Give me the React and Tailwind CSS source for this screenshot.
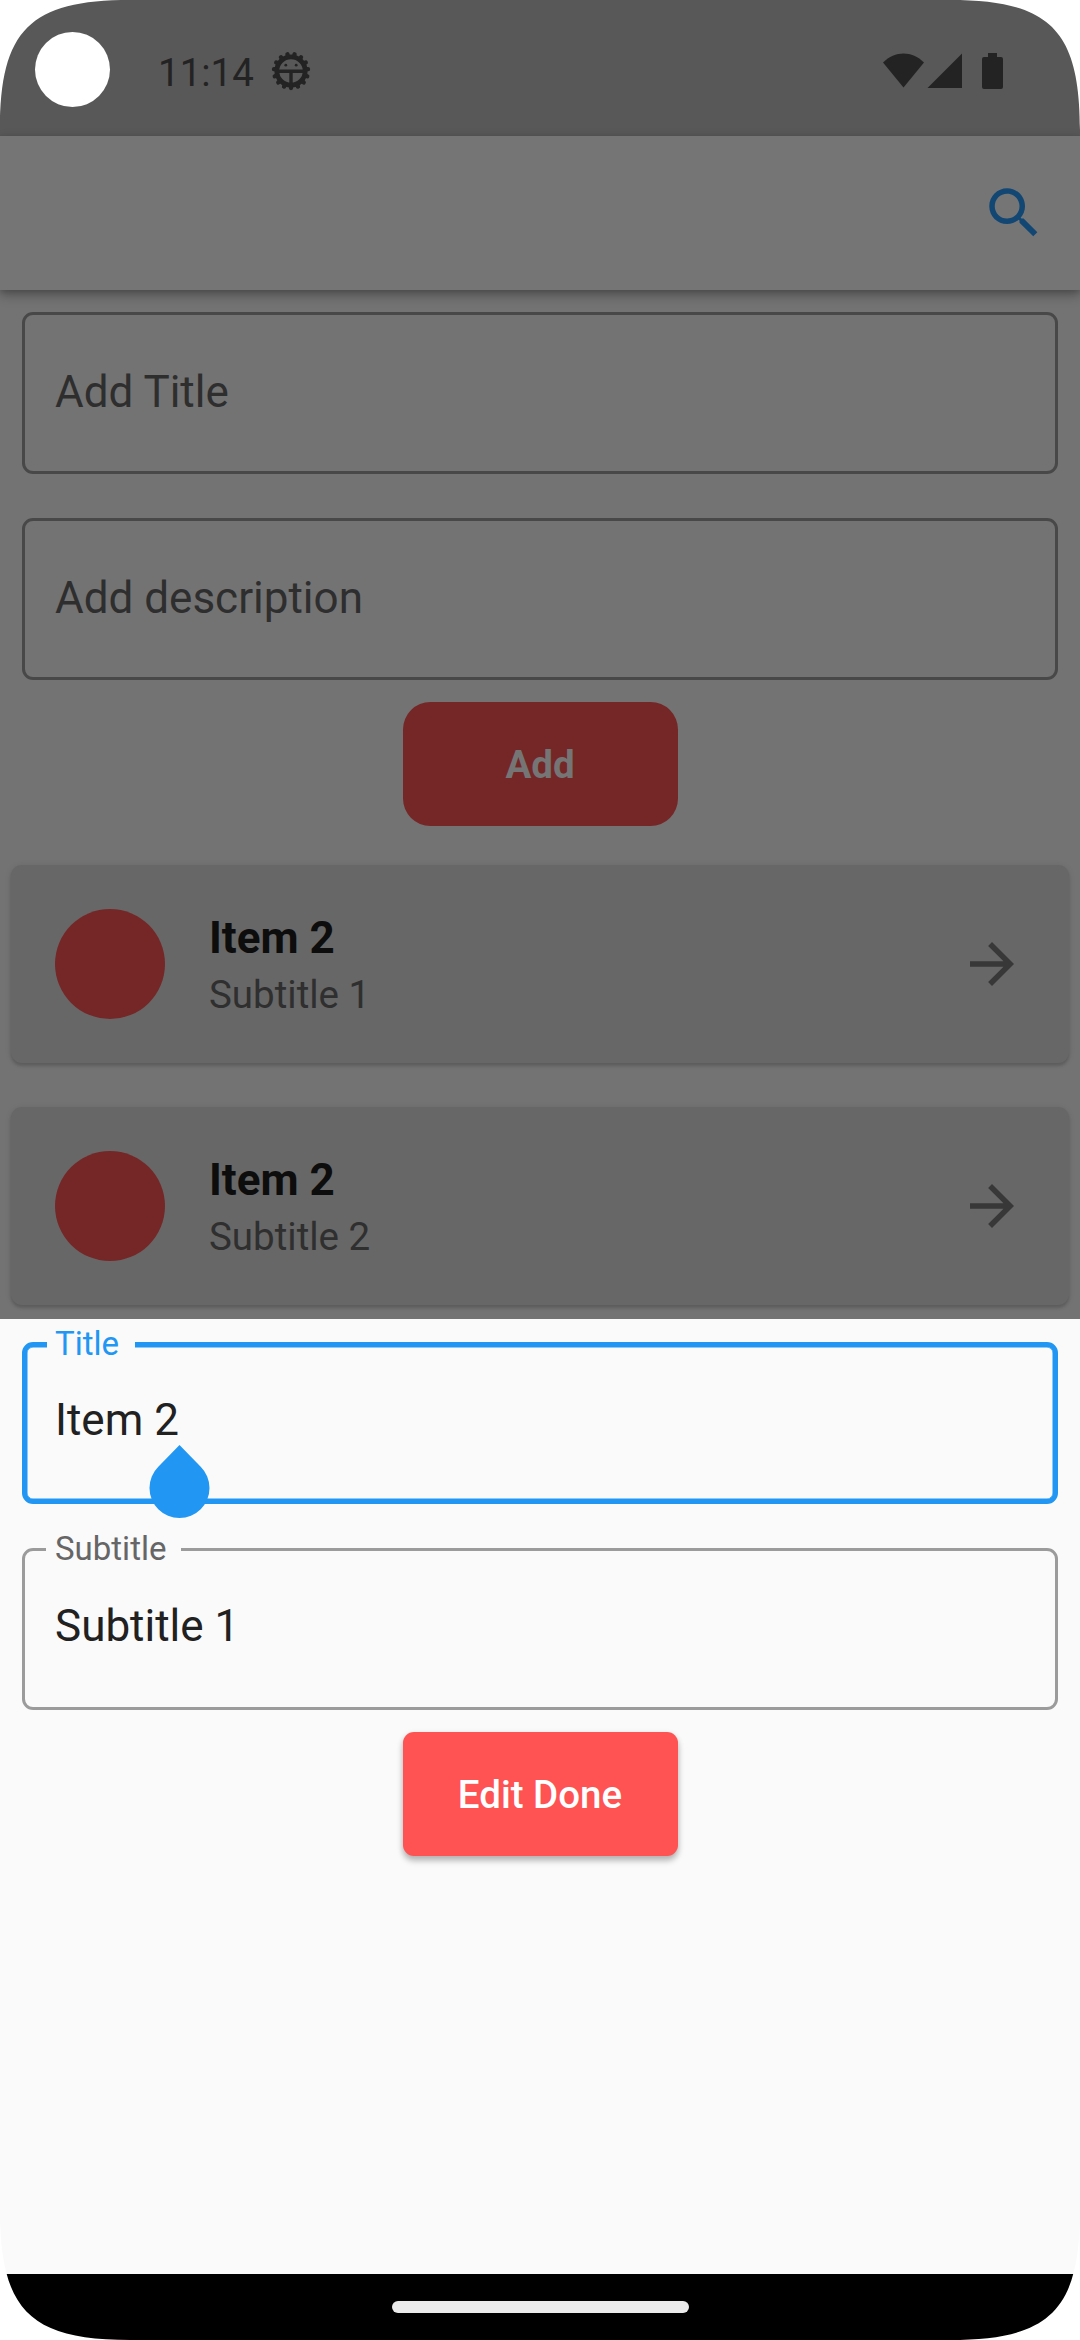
import React from "react";

function Corner({ className }) {
  return (
    <svg className={"absolute w-[130px] h-[130px] " + className} viewBox="0 0 130 130" fill="#fff">
      <path d="M0 0H130C30 0 0 30 0 130Z" />
    </svg>
  );
}

function DebugIcon() {
  const teeth = Array.from({ length: 15 }, (_, i) => (Math.PI * 2 * i) / 15 + Math.PI / 2);
  return (
    <svg className="w-[40px] h-[40px]" viewBox="-20 -20 40 40">
      <circle r="14.2" fill="none" stroke="#232323" strokeWidth="4.8" />
      {teeth.map((a) => (
        <line
          key={a}
          x1={15 * Math.cos(a)}
          y1={15 * Math.sin(a)}
          x2={17.1 * Math.cos(a)}
          y2={17.1 * Math.sin(a)}
          stroke="#232323"
          strokeWidth="4.3"
          strokeLinecap="round"
        />
      ))}
      <path d="M-14 0.2H14M0 0.2V16" stroke="#232323" strokeWidth="3.4" />
      <circle cx="-5.2" cy="-5.8" r="1.4" fill="#232323" />
      <circle cx="5.2" cy="-5.8" r="1.4" fill="#232323" />
    </svg>
  );
}

function StatusBar() {
  return (
    <div className="h-[136px] bg-[#585858] flex items-start">
      <div className="ml-[35px] mt-[32px] size-[75px] rounded-full bg-white" />
      <div className="ml-[48px] mt-[50px] w-[99px] text-[38.5px] leading-[46px] text-[#232323]">11:14</div>
      <div className="ml-[14px] mt-[51px]"><DebugIcon /></div>
      <svg className="ml-auto mr-[76px] mt-[53px] w-[121px] h-[36px]" viewBox="0 0 121 36" fill="#232323">
        <path d="M0 9.5C12 -2.5 29 -2.5 41 9.5L20.5 34.5Z" />
        <path d="M44.5 35L79 .5V35Z" />
        <path d="M105 0h9v4h4a2 2 0 0 1 2 2v28a2 2 0 0 1-2 2h-17a2 2 0 0 1-2-2V6a2 2 0 0 1 2-2h4Z" />
      </svg>
    </div>
  );
}

function AppBar() {
  return (
    <div className="relative z-10 h-[154px] bg-[#757575] flex items-center justify-end pr-[33px] shadow-[0_5px_11px_rgba(0,0,0,0.3),0_2px_5px_rgba(0,0,0,0.12)]">
      <svg className="size-[66px]" viewBox="0 0 24 24" fill="#124774">
        <path d="M15.5 14h-.79l-.28-.27C15.41 12.59 16 11.11 16 9.5 16 5.91 13.09 3 9.5 3S3 5.91 3 9.5 5.91 16 9.5 16c1.61 0 3.09-.59 4.23-1.57l.27.28v.79l5 4.99L20.49 19l-4.99-5zm-6 0C7.01 14 5 11.99 5 9.5S7.01 5 9.5 5 14 7.01 14 9.5 11.99 14 9.5 14z" />
      </svg>
    </div>
  );
}

function AddField({ label }) {
  return (
    <div className="h-[162px] border-[3px] border-[#484848] rounded-[11px] pl-[30px] pt-[51px] text-[44px] leading-[52px] text-[#2e2e2e]">
      {label}
    </div>
  );
}

function ItemCard({ title, subtitle }) {
  return (
    <div className="h-[198px] rounded-[11px] bg-[#676767] flex items-center pl-[44px] pr-[44px] shadow-[0_3px_3px_rgba(0,0,0,0.14),0_1px_6px_rgba(0,0,0,0.1)]">
      <div className="size-[110px] rounded-full bg-[#752727]" />
      <div className="ml-[44px] flex-1 pt-[4px]">
        <div className="text-[44px] leading-[56px] font-bold text-[#0d0d0d]">{title}</div>
        <div className="text-[38.5px] leading-[57px] text-[#2f2f2f]">{subtitle}</div>
      </div>
      <svg className="size-[66px]" viewBox="0 0 24 24" fill="#383838">
        <path d="M12 4l-1.41 1.41L16.17 11H4v2h12.17l-5.58 5.59L12 20l8-8z" />
      </svg>
    </div>
  );
}

export default function App() {
  return (
    <div className="relative w-[1080px] h-[2340px] overflow-hidden bg-[#737373] flex flex-col font-[Roboto,sans-serif]">
      <StatusBar />
      <AppBar />
      <div className="h-[1029px] flex flex-col overflow-hidden">
        <div className="px-[22px] pt-[22px] flex flex-col gap-[44px]">
          <AddField label="Add Title" />
          <AddField label="Add description" />
        </div>
        <div className="mt-[22px] self-center w-[275px] h-[124px] pt-[2px] rounded-[27.5px] bg-[#752727] flex items-center justify-center text-[38.5px] font-bold text-[#757575]">
          Add
        </div>
        <div className="px-[11px] mt-[39px] flex flex-col gap-[44px]">
          <ItemCard title="Item 2" subtitle="Subtitle 1" />
          <ItemCard title="Item 2" subtitle="Subtitle 2" />
        </div>
      </div>
      <div className="h-[955px] bg-[#fafafa] flex flex-col px-[22px] pt-[23px]">
        <div className="relative h-[162px] border-[5px] border-[#2196f3] shadow-[inset_0_0_0_0.5px_#2196f3] rounded-[11px] pl-[28px] pt-[47px] text-[44px] leading-[52px] text-[#212121]">
          Item 2
          <span className="absolute left-[20px] -top-[23px] w-[88px] h-[40px] pl-[8px] bg-[#fafafa] text-[33px] leading-[40px] text-[#2196f3]">Title</span>
          <svg className="absolute left-[122px] top-[98px] w-[61px] h-[74px]" viewBox="0 0 61 74" fill="#2196f3">
            <path d="M30.5 0L51.7 21.8A30 30 0 1 1 9.3 21.8Z" />
          </svg>
        </div>
        <div className="relative mt-[44px] h-[162px] border-[3px] border-[#9b9b9b] rounded-[11px] pl-[30px] pt-[49px] text-[44px] leading-[52px] text-[#212121]">
          Subtitle 1
          <span className="absolute left-[21px] -top-[22px] w-[135px] h-[40px] pl-[9px] bg-[#fafafa] text-[33px] leading-[40px] text-[#666666]">Subtitle</span>
        </div>
        <div className="mt-[22px] self-center w-[275px] h-[124px] pt-[2px] rounded-[11px] bg-[#ff5252] flex items-center justify-center text-[38.5px] font-medium text-white shadow-[0_5px_6px_rgba(0,0,0,0.22),0_2px_6px_rgba(0,0,0,0.12)]">
          Edit Done
        </div>
      </div>
      <div className="flex-1 bg-black flex justify-center pt-[27px]">
        <div className="w-[297px] h-[12px] rounded-full bg-[#ebebeb]" />
      </div>
      <Corner className="left-0 top-0 z-20" />
      <Corner className="right-0 top-0 z-20 -scale-x-100" />
      <Corner className="left-0 bottom-0 z-20 -scale-y-100" />
      <Corner className="right-0 bottom-0 z-20 -scale-100" />
    </div>
  );
}
